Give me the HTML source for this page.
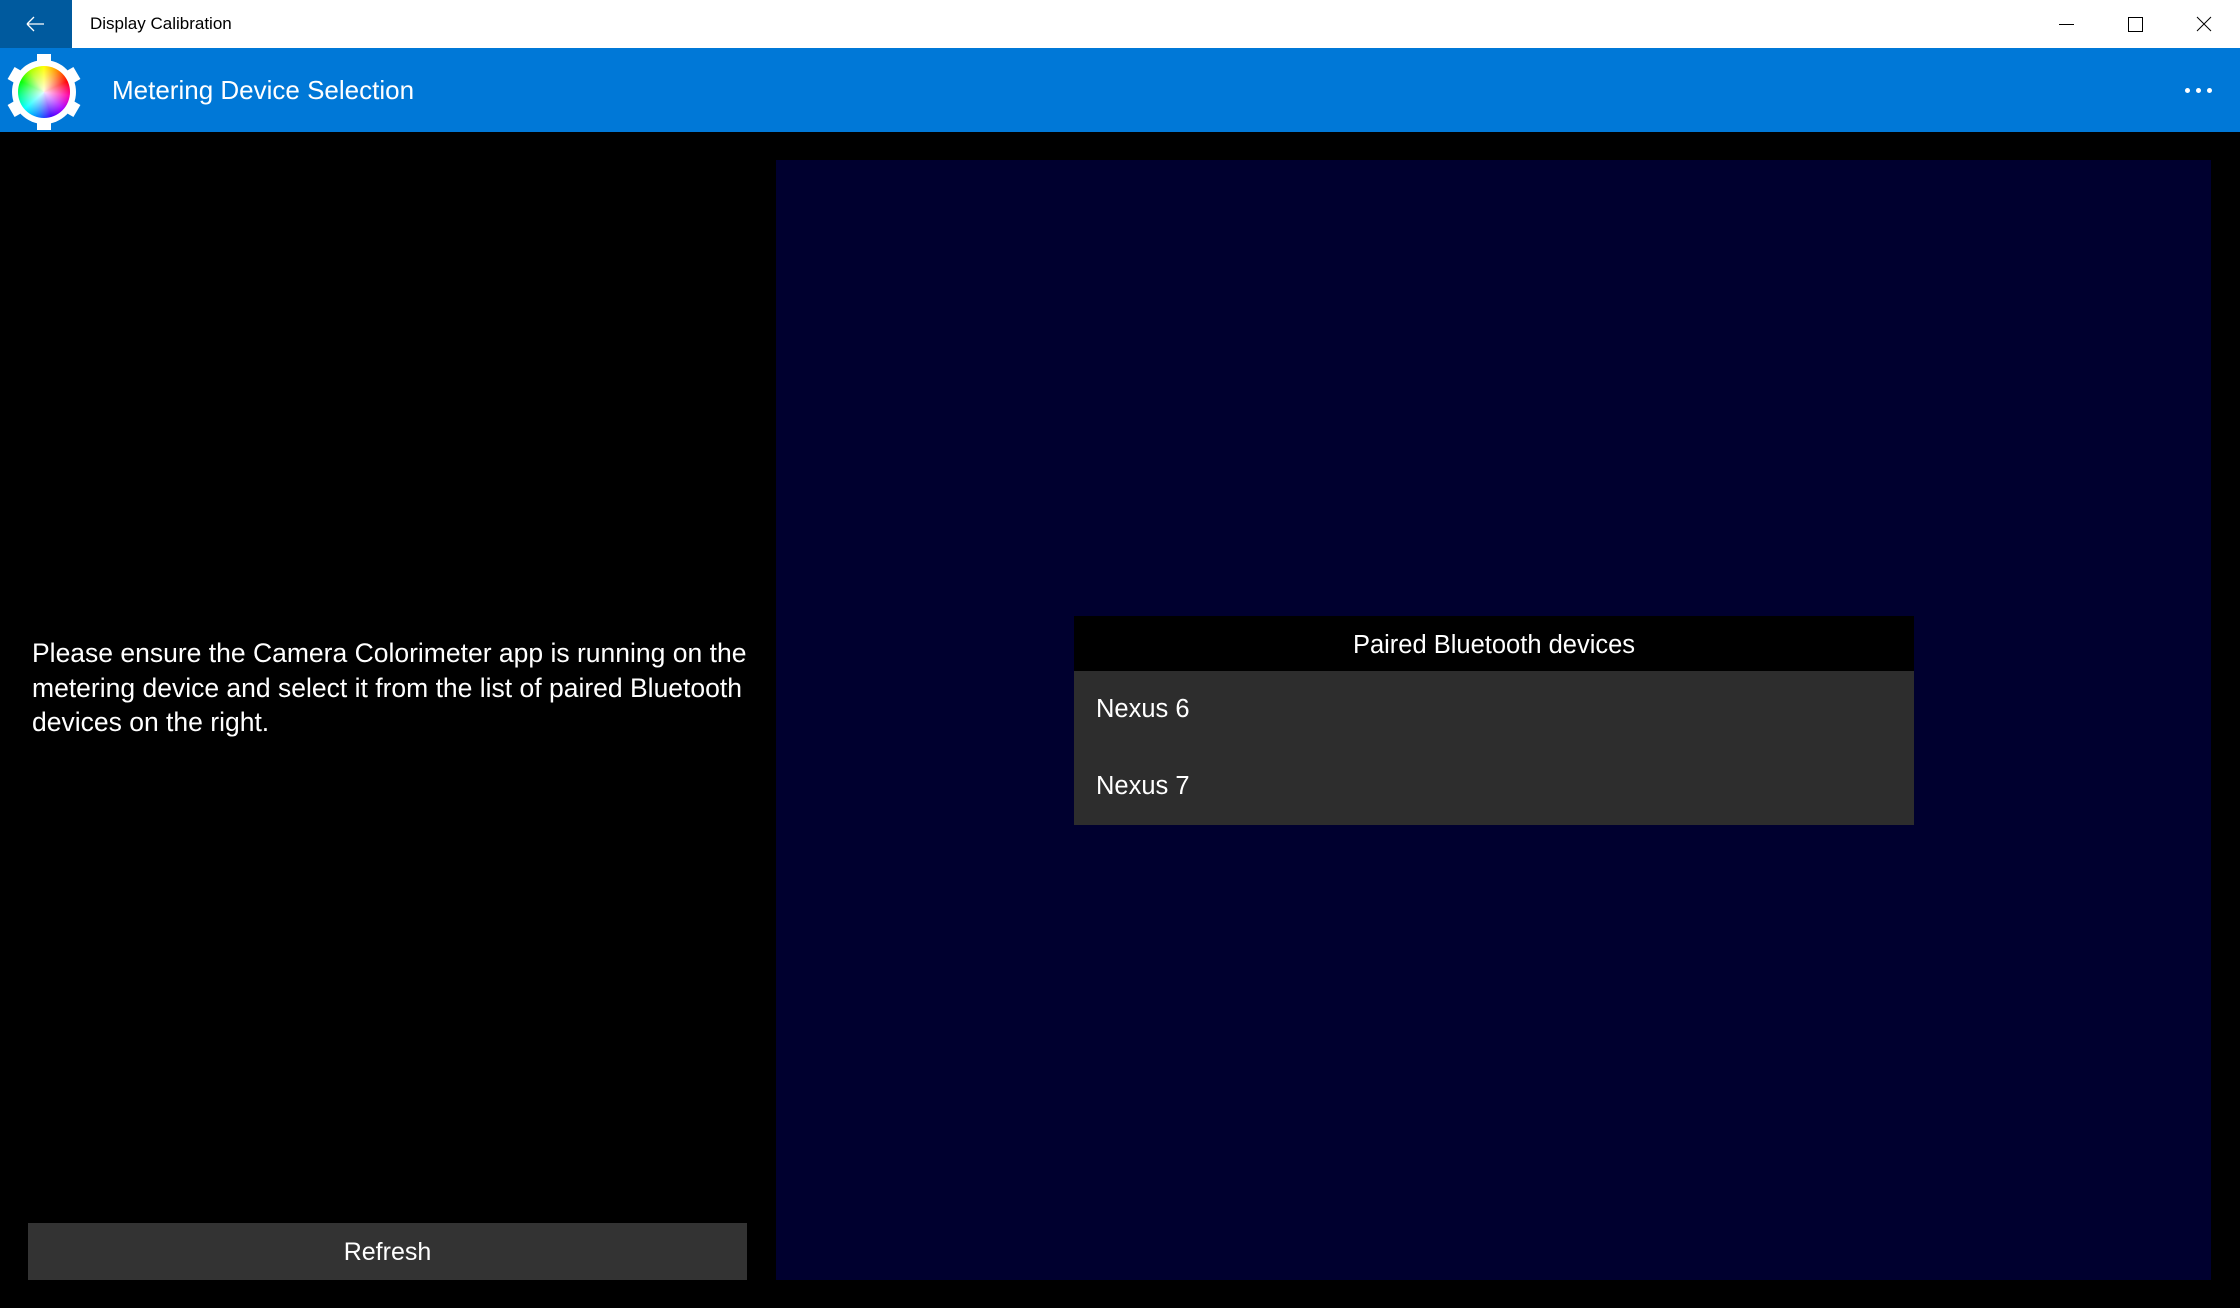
<!DOCTYPE html>
<html><head><meta charset="utf-8"><style>
*{margin:0;padding:0;box-sizing:border-box}
body{width:2240px;height:1308px;background:#000;font-family:"Liberation Sans",sans-serif;position:relative;overflow:hidden;color:#fff}
.tb{position:absolute;left:0;top:0;width:2240px;height:48px;background:#fff;color:#000}
.back{position:absolute;left:0;top:0;width:72px;height:48px;background:#005a9e}
.tt{position:absolute;left:90px;top:14px;font-size:17px}
.hdr{position:absolute;left:0;top:48px;width:2240px;height:84px;background:#0078d7}
.ht{position:absolute;left:112px;top:27px;font-size:26px}
.dots{position:absolute;left:2185px;top:40px}
.dots i{position:absolute;top:0;width:5px;height:5px;border-radius:50%;background:#fff}
.txt{position:absolute;left:32px;top:636px;font-size:26.5px;line-height:34.5px;white-space:nowrap;letter-spacing:0}
.btn{position:absolute;left:28px;top:1223px;width:719px;height:57px;background:#333;font-size:25px;text-align:center;line-height:59px}
.rp{position:absolute;left:776px;top:160px;width:1435px;height:1120px;background:#00002f}
.dh{position:absolute;left:1074px;top:616px;width:840px;height:55px;background:#000;text-align:center;font-size:25.5px;line-height:58px}
.dl{position:absolute;left:1074px;top:671px;width:840px;height:154px;background:#2d2d2d;font-size:25.5px}
.dl div{position:absolute;left:22px}
</style></head><body>
<div class="tb">
 <div class="back"><svg width="72" height="48"><path d="M27 24H44M27 24L34 17M27 24L34 31" stroke="#fff" stroke-width="1.3" fill="none"/></svg></div>
 <div class="tt">Display Calibration</div>
 <svg style="position:absolute;left:2040px;top:0" width="200" height="48"><path d="M19 24.5H34" stroke="#000" stroke-width="1"/><rect x="88.5" y="17.5" width="14" height="14" stroke="#000" fill="none"/><path d="M157 17L171 31M171 17L157 31" stroke="#000" stroke-width="1"/></svg>
</div>
<div class="hdr">
 <svg style="position:absolute;left:4px;top:4px" width="80" height="80" viewBox="0 0 80 80">
  <g fill="#fff" transform="translate(40,40)">
   <circle r="32"/>
   <rect x="-7" y="-38" width="14" height="10"/>
   <rect x="-7" y="-38" width="14" height="10" transform="rotate(60)"/>
   <rect x="-7" y="-38" width="14" height="10" transform="rotate(120)"/>
   <rect x="-7" y="-38" width="14" height="10" transform="rotate(180)"/>
   <rect x="-7" y="-38" width="14" height="10" transform="rotate(240)"/>
   <rect x="-7" y="-38" width="14" height="10" transform="rotate(300)"/>
  </g>
  <foreignObject x="14" y="14" width="52" height="52"><div xmlns="http://www.w3.org/1999/xhtml" style="width:52px;height:52px;border-radius:50%;background:radial-gradient(circle,rgba(255,255,255,.9),rgba(255,255,255,0) 70%),conic-gradient(from 0deg,#ff0,#f80,#f00,#f0a,#a0f,#40f,#08f,#0ff,#0f8,#0f0,#af0,#ff0)"></div></foreignObject>
 </svg>
 <div class="ht">Metering Device Selection</div>
 <div class="dots"><i style="left:0"></i><i style="left:11px"></i><i style="left:22px"></i></div>
</div>
<div class="txt">Please ensure the Camera Colorimeter app is running on the<br>metering device and select it from the list of paired Bluetooth<br>devices on the right.</div>
<div class="btn">Refresh</div>
<div class="rp"></div>
<div class="dh">Paired Bluetooth devices</div>
<div class="dl"><div style="top:24px">Nexus 6</div><div style="top:101px">Nexus 7</div></div>
</body></html>
